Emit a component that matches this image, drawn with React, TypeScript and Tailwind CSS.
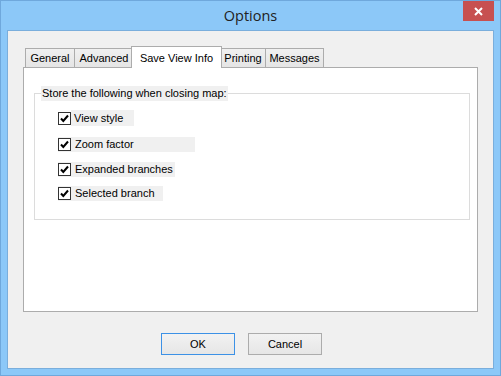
import React from "react";

const F = { fontFamily: '"Liberation Sans", Arial, sans-serif' };

function Check() {
  return (
    <div className="w-[13px] h-[13px] border border-[#333333] bg-white flex items-center justify-center shrink-0">
      <svg width="11" height="11" viewBox="0 0 11 11">
        <path d="M2 5.5 L4.3 8 L9 2.5" fill="none" stroke="#000" strokeWidth="2" />
      </svg>
    </div>
  );
}

function Tab({ label, w, ml, sel }: { label: string; w: string; ml: string; sel?: boolean }) {
  if (sel) {
    return (
      <div
        className={`${w} ${ml} relative z-10 h-[22px] mb-[-1px] bg-white border border-b-0 border-[#acacac] flex items-start justify-center pt-[3px] text-[11px] text-black whitespace-nowrap`}
      >
        {label}
      </div>
    );
  }
  return (
    <div
      className={`${w} ${ml} h-[19px] bg-gradient-to-b from-[#f0f0f0] to-[#e5e5e5] border border-b-0 border-[#acacac] flex items-center justify-center pt-[1px] text-[11px] text-black whitespace-nowrap`}
    >
      {label}
    </div>
  );
}

export default function App() {
  return (
    <div className="w-[501px] h-[376px] bg-[#8cc8f8] border border-[#6fa8dc] flex flex-col" style={F}>
      <div className="h-[29px] relative flex items-center justify-center">
        <span className="text-[14.5px] text-[#222222] pt-[1px]" style={{ fontFamily: '"Open Sans", "Noto Sans", sans-serif' }}>
          Options
        </span>
        <div className="absolute top-0 right-[6px] w-[31px] h-[20px] bg-[#c75050] flex items-center justify-center">
          <svg width="9" height="9" viewBox="0 0 9 9">
            <path d="M1 1 L8 8 M8 1 L1 8" stroke="#fff" strokeWidth="2" />
          </svg>
        </div>
      </div>
      <div className="mx-[6px] mb-[6px] flex-1 border border-[#7aaedc] bg-[#f0f0f0] flex flex-col pl-[15px] pt-[15px]">
        <div className="flex items-end h-[21px] pl-[2px]">
          <Tab label="General" w="w-[50px]" ml="ml-0" />
          <Tab label="Advanced" w="w-[60px]" ml="ml-[-1px]" />
          <Tab label="Save View Info" w="w-[91px]" ml="ml-[-3px]" sel />
          <Tab label="Printing" w="w-[46px]" ml="ml-[-2px]" />
          <Tab label="Messages" w="w-[59px]" ml="ml-[-1px]" />
        </div>
        <div className="w-[455px] h-[245px] bg-white border border-[#acacac] pl-[10px] pt-[25px]">
          <div className="relative w-[436px] h-[127px] border border-[#dcdcdc] flex flex-col pl-[23px]">
            <div className="absolute -top-[8px] left-[6px] bg-[#f0f0f0] px-[1px] h-[15px] flex items-center text-[11px] text-black whitespace-nowrap">
              Store the following when closing map:
            </div>
            <div className="mt-[16px] h-[16px] flex items-center">
              <Check />
              <div className="w-[63px] h-[16px] bg-[#f0f0f0] flex items-center pl-[3px] text-[11px] text-black whitespace-nowrap">View style</div>
            </div>
            <div className="mt-[11px] w-[137px] h-[15px] bg-[#f0f0f0] flex items-center text-[11px] text-black whitespace-nowrap">
              <Check />
              <span className="ml-[4px]">Zoom factor</span>
            </div>
            <div className="mt-[10px] w-[117px] h-[15px] bg-[#f0f0f0] flex items-center text-[11px] text-black whitespace-nowrap">
              <Check />
              <span className="ml-[4px]">Expanded branches</span>
            </div>
            <div className="mt-[9px] w-[105px] h-[15px] bg-[#f0f0f0] flex items-center text-[11px] text-black whitespace-nowrap">
              <Check />
              <span className="ml-[4px]">Selected branch</span>
            </div>
          </div>
        </div>
        <div className="flex mt-[21px] ml-[138px] gap-[13px]">
          <div className="w-[74px] h-[22px] border border-[#3c91e6] bg-gradient-to-b from-[#f2f2f2] to-[#e6e6e6] flex items-center justify-center text-[11px] text-black">
            OK
          </div>
          <div className="w-[74px] h-[22px] border border-[#acacac] bg-gradient-to-b from-[#f2f2f2] to-[#e6e6e6] flex items-center justify-center text-[11px] text-black">
            Cancel
          </div>
        </div>
      </div>
    </div>
  );
}
